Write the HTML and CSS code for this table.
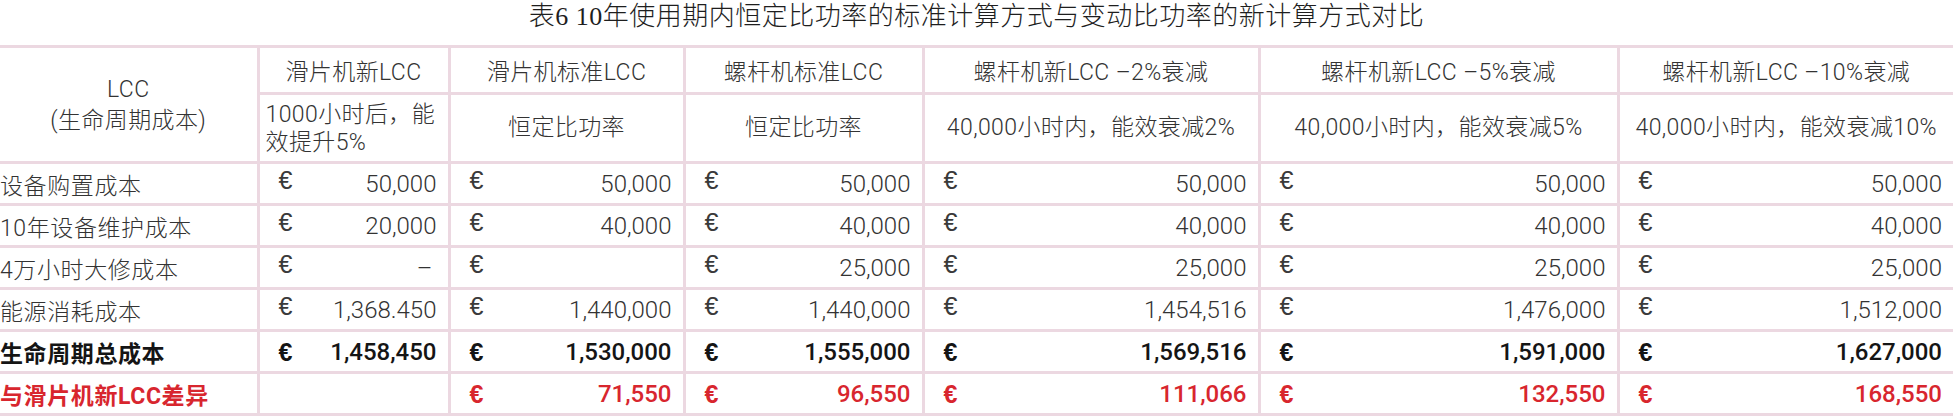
FILE: index.html
```html
<!DOCTYPE html>
<html lang="zh-CN">
<head>
<meta charset="utf-8">
<title>表6 LCC对比</title>
<link rel="stylesheet" href="styles.css">
</head>
<body>
<div class="title">表6 10年使用期内恒定比功率的标准计算方式与变动比功率的新计算方式对比</div>
<table class="lcc">
  <colgroup>
    <col class="c1"><col class="c2"><col class="c3"><col class="c4"><col class="c5"><col class="c6"><col class="c7">
  </colgroup>
  <thead>
    <tr class="h1">
      <th rowspan="2" class="corner">LCC<br>(生命周期成本)</th>
      <th>滑片机新LCC</th>
      <th>滑片机标准LCC</th>
      <th>螺杆机标准LCC</th>
      <th>螺杆机新LCC –2%衰减</th>
      <th>螺杆机新LCC –5%衰减</th>
      <th>螺杆机新LCC –10%衰减</th>
    </tr>
    <tr class="h2">
      <th class="left">1000小时后，能<br>效提升5%</th>
      <th>恒定比功率</th>
      <th>恒定比功率</th>
      <th>40,000小时内，能效衰减2%</th>
      <th>40,000小时内，能效衰减5%</th>
      <th>40,000小时内，能效衰减10%</th>
    </tr>
  </thead>
  <tbody>
    <tr>
      <td class="label">设备购置成本</td>
      <td><div class="cell"><span class="eur">€</span><span>50,000</span></div></td>
      <td><div class="cell"><span class="eur">€</span><span>50,000</span></div></td>
      <td><div class="cell"><span class="eur">€</span><span>50,000</span></div></td>
      <td><div class="cell"><span class="eur">€</span><span>50,000</span></div></td>
      <td><div class="cell"><span class="eur">€</span><span>50,000</span></div></td>
      <td><div class="cell"><span class="eur">€</span><span>50,000</span></div></td>
    </tr>
    <tr>
      <td class="label">10年设备维护成本</td>
      <td><div class="cell"><span class="eur">€</span><span>20,000</span></div></td>
      <td><div class="cell"><span class="eur">€</span><span>40,000</span></div></td>
      <td><div class="cell"><span class="eur">€</span><span>40,000</span></div></td>
      <td><div class="cell"><span class="eur">€</span><span>40,000</span></div></td>
      <td><div class="cell"><span class="eur">€</span><span>40,000</span></div></td>
      <td><div class="cell"><span class="eur">€</span><span>40,000</span></div></td>
    </tr>
    <tr>
      <td class="label">4万小时大修成本</td>
      <td><div class="cell"><span class="eur">€</span><span class="dash">–</span></div></td>
      <td><div class="cell"><span class="eur">€</span><span></span></div></td>
      <td><div class="cell"><span class="eur">€</span><span>25,000</span></div></td>
      <td><div class="cell"><span class="eur">€</span><span>25,000</span></div></td>
      <td><div class="cell"><span class="eur">€</span><span>25,000</span></div></td>
      <td><div class="cell"><span class="eur">€</span><span>25,000</span></div></td>
    </tr>
    <tr>
      <td class="label">能源消耗成本</td>
      <td><div class="cell"><span class="eur">€</span><span>1,368.450</span></div></td>
      <td><div class="cell"><span class="eur">€</span><span>1,440,000</span></div></td>
      <td><div class="cell"><span class="eur">€</span><span>1,440,000</span></div></td>
      <td><div class="cell"><span class="eur">€</span><span>1,454,516</span></div></td>
      <td><div class="cell"><span class="eur">€</span><span>1,476,000</span></div></td>
      <td><div class="cell"><span class="eur">€</span><span>1,512,000</span></div></td>
    </tr>
    <tr class="total">
      <td class="label">生命周期总成本</td>
      <td><div class="cell"><span class="eur">€</span><span>1,458,450</span></div></td>
      <td><div class="cell"><span class="eur">€</span><span>1,530,000</span></div></td>
      <td><div class="cell"><span class="eur">€</span><span>1,555,000</span></div></td>
      <td><div class="cell"><span class="eur">€</span><span>1,569,516</span></div></td>
      <td><div class="cell"><span class="eur">€</span><span>1,591,000</span></div></td>
      <td><div class="cell"><span class="eur">€</span><span>1,627,000</span></div></td>
    </tr>
    <tr class="diff">
      <td class="label">与滑片机新LCC差异</td>
      <td></td>
      <td><div class="cell"><span class="eur">€</span><span>71,550</span></div></td>
      <td><div class="cell"><span class="eur">€</span><span>96,550</span></div></td>
      <td><div class="cell"><span class="eur">€</span><span>111,066</span></div></td>
      <td><div class="cell"><span class="eur">€</span><span>132,550</span></div></td>
      <td><div class="cell"><span class="eur">€</span><span>168,550</span></div></td>
    </tr>
  </tbody>
</table>
</body>
</html>
```

FILE: styles.css
```css
html, body {
  margin: 0;
  padding: 0;
  background: #ffffff;
}

body {
  width: 1953px;
  overflow: hidden;
  font-family: Roboto, "Noto Sans CJK SC", sans-serif;
  color: #333333;
}

.title {
  height: 45px;
  line-height: 34px;
  text-align: center;
  font-family: "Liberation Serif", "Noto Sans CJK SC", serif;
  font-size: 26px;
  font-weight: 300;
  color: #1e1e1e;
  letter-spacing: 0.5px;
}

.lcc {
  width: 1953px;
  table-layout: fixed;
  border-collapse: collapse;
  font-size: 23px;
  font-weight: 300;
}

.c1 { width: 258px; }
.c2 { width: 191px; }
.c3 { width: 235px; }
.c4 { width: 239px; }
.c5 { width: 336px; }
.c6 { width: 359px; }
.c7 { width: 335px; }

.lcc th,
.lcc td {
  border: 3px solid #ecd8e1;
  padding: 0;
  vertical-align: middle;
  white-space: nowrap;
}

.lcc tr > :first-child {
  border-left: none;
}

.lcc tr > :last-child {
  border-right: none;
}

.lcc th {
  font-weight: 300;
  text-align: center;
  color: #333333;
  letter-spacing: 0.4px;
}

.h1 {
  height: 47px;
}

.h2 {
  height: 69px;
}

.corner {
  line-height: 31px;
  padding-bottom: 6px;
}

.h2 th {
  line-height: 28px;
}

.h2 th.left {
  text-align: left;
  padding-left: 6px;
  padding-top: 2px;
}

.lcc tbody tr {
  height: 42px;
}

.label {
  padding-left: 3px;
  text-align: left;
  letter-spacing: 0.6px;
}

.cell {
  display: flex;
  justify-content: space-between;
  align-items: center;
  padding: 0 11px 0 19px;
  font-size: 24px;
}

.eur {
  font-family: "Liberation Sans", "DejaVu Sans", sans-serif;
  font-size: 25px;
  font-weight: 400;
  color: #3a3a3a;
  position: relative;
  top: -3px;
}

.dash {
  padding-right: 4px;
}

.total td {
  color: #151515;
  font-weight: 500;
}

.total .label {
  font-weight: 700;
}

.total .eur {
  font-weight: 700;
  color: #151515;
  top: 1px;
}

.diff td {
  color: #d8262e;
  font-weight: 500;
}

.diff .label {
  font-weight: 700;
}

.diff .eur {
  font-weight: 700;
  color: #d8262e;
  top: 1px;
}
```
